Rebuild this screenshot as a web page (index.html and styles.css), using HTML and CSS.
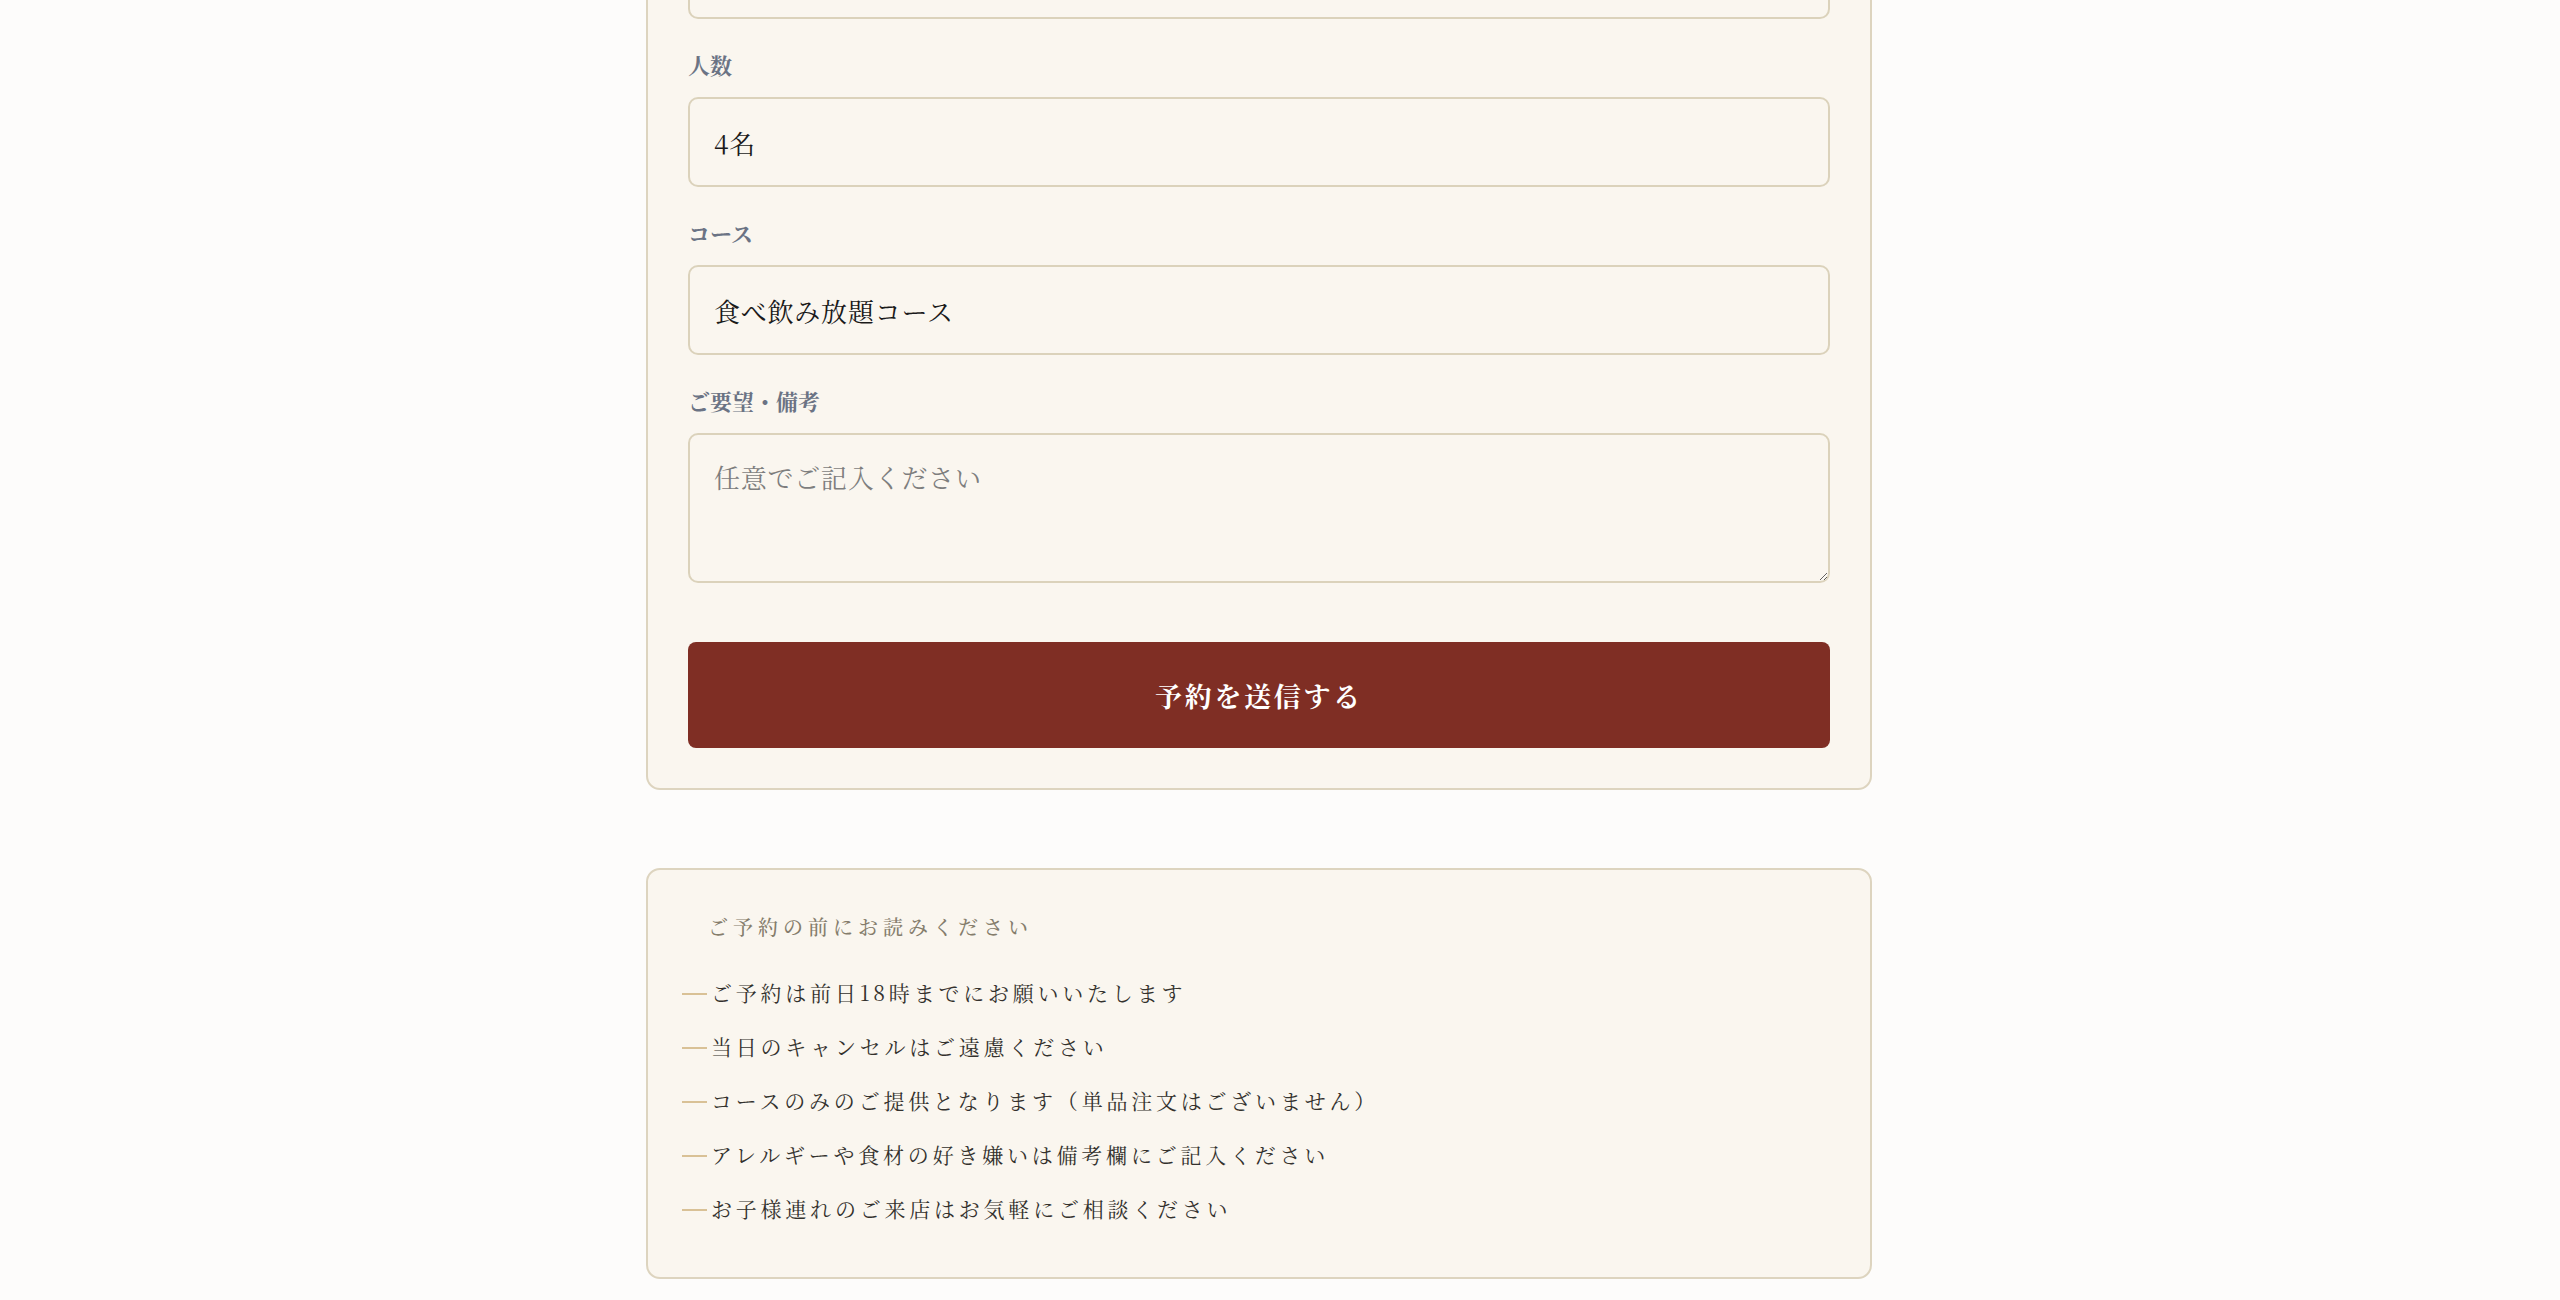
FILE: index.html
```html
<!DOCTYPE html>
<html lang="ja">
<head>
<meta charset="utf-8">
<title>ご予約</title>
<link rel="stylesheet" href="styles.css">
</head>
<body>
<main class="page">
  <form class="card form-card">
    <div class="field">
      <label class="label">ご来店時間</label>
      <input class="input" type="text" value="18:00">
    </div>
    <div class="field">
      <label class="label">人数</label>
      <input class="input" type="text" value="4名">
    </div>
    <div class="field">
      <label class="label">コース</label>
      <input class="input" type="text" value="食べ飲み放題コース">
    </div>
    <div class="field">
      <label class="label">ご要望・備考</label>
      <textarea class="input textarea" placeholder="任意でご記入ください"></textarea>
    </div>
    <button class="submit" type="button">予約を送信する</button>
  </form>

  <section class="card notes">
    <h2 class="notes-title">ご予約の前にお読みください</h2>
    <ul class="notes-list">
      <li>ご予約は前日18時までにお願いいたします</li>
      <li>当日のキャンセルはご遠慮ください</li>
      <li>コースのみのご提供となります（単品注文はございません）</li>
      <li>アレルギーや食材の好き嫌いは備考欄にご記入ください</li>
      <li>お子様連れのご来店はお気軽にご相談ください</li>
    </ul>
  </section>
</main>
</body>
</html>
```

FILE: styles.css
```css
html, body {
  margin: 0;
  padding: 0;
  background: #fdfcfb;
}

body {
  font-family: "Noto Serif CJK JP", "Noto Serif JP", "Source Han Serif JP", serif;
  color: #2b2b2b;
}

.page {
  width: 1226px;
  margin: -157px 0 0 646px;
  display: flex;
  flex-direction: column;
  gap: 78px;
}

.card {
  box-sizing: border-box;
  background: #faf6ef;
  border: 2px solid #ddd4bf;
  border-radius: 14px;
}

.form-card {
  padding: 40px 40px 40px;
  display: flex;
  flex-direction: column;
}

.field {
  display: flex;
  flex-direction: column;
  margin-bottom: 34px;
}

.label {
  font-size: 22px;
  line-height: 24px;
  font-weight: 700;
  letter-spacing: 0;
  color: #6b7384;
  margin-bottom: 20px;
}

.input {
  box-sizing: border-box;
  display: block;
  width: 100%;
  height: 90px;
  padding: 0 24px;
  font-family: inherit;
  font-size: 26px;
  letter-spacing: 0.03em;
  color: #1a1a1a;
  background: #faf6ef;
  border: 2px solid #dbd2bb;
  border-radius: 10px;
  outline: none;
}

.textarea {
  height: 150px;
  padding: 20px 24px;
  line-height: 44px;
  resize: vertical;
}

.textarea::placeholder {
  color: #7e7e7e;
}

.submit {
  margin-top: 25px;
  height: 106px;
  border: none;
  border-radius: 8px;
  background: #7f2e24;
  color: #fff;
  font-family: inherit;
  font-size: 27px;
  font-weight: 700;
  letter-spacing: 0.1em;
}

.notes {
  padding: 38px 34px 48px;
}

.notes-title {
  margin: 0 0 26px 26px;
  font-size: 20px;
  line-height: 38px;
  font-weight: 500;
  letter-spacing: 0.25em;
  color: #857d6c;
}

.notes-list {
  list-style: none;
  margin: 0;
  padding: 0;
  display: flex;
  flex-direction: column;
  gap: 13px;
}

.notes-list li {
  font-size: 21px;
  line-height: 41px;
  letter-spacing: 0.18em;
  color: #33312d;
}

.notes-list li::before {
  content: "";
  display: inline-block;
  width: 25px;
  height: 2px;
  background: #d9c196;
  vertical-align: middle;
  margin: 0 4px 3px 0;
}
```
